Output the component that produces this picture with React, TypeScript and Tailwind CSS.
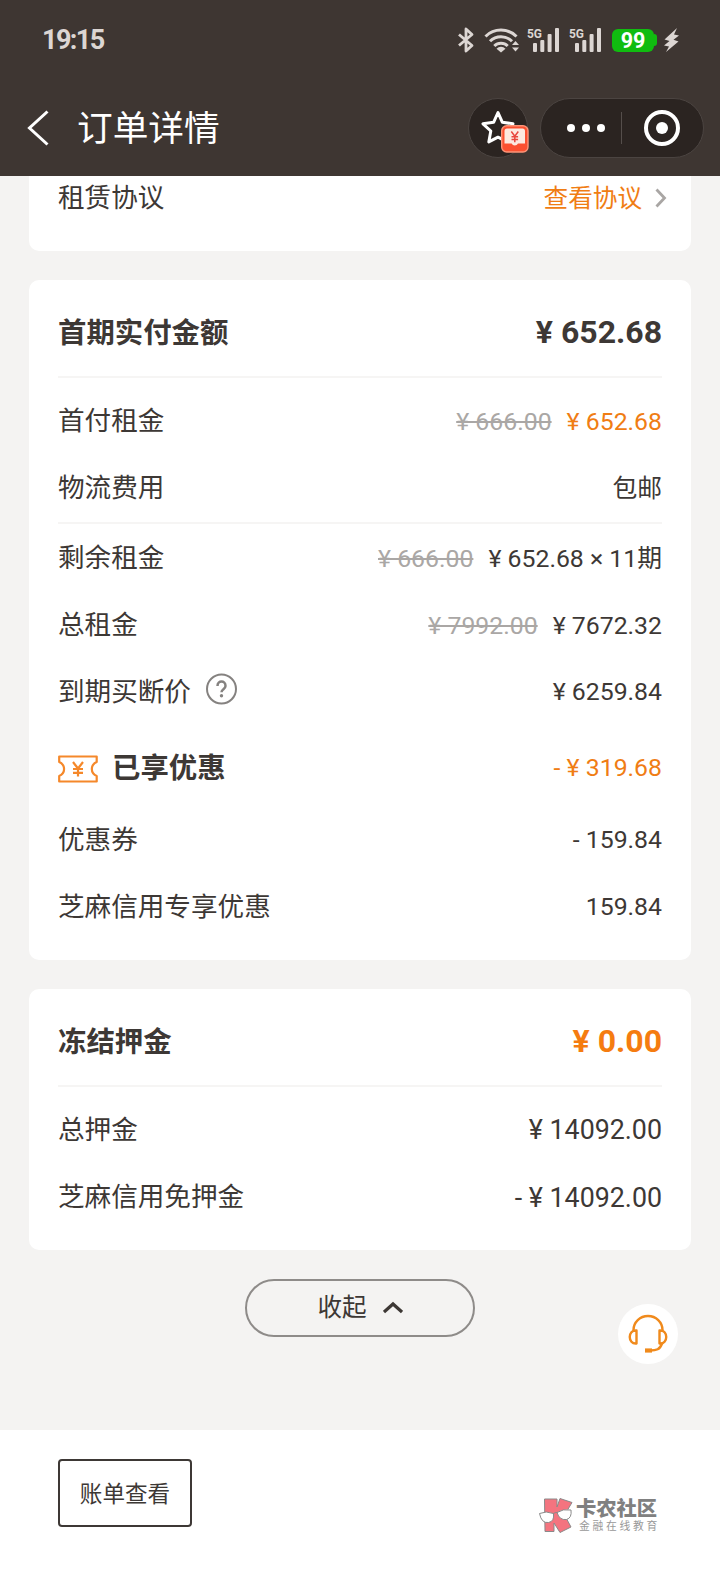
import type { ReactNode } from 'react';

interface RowProps {
  label: ReactNode;
  value: ReactNode;
  oldValue?: string;
  className?: string;
  valueClassName?: string;
}

function Row({ label, value, oldValue, className = 'h-[67px]', valueClassName = 'pt-[2px] text-[24.8px]' }: RowProps) {
  return (
    <div className={`flex items-center justify-between ${className}`}>
      <div className="flex items-center text-[26.6px]">{label}</div>
      <div className={`flex items-center gap-[15px] ${valueClassName}`}>
        {oldValue && <span className="text-[#aaa7a5] line-through">{oldValue}</span>}
        <span>{value}</span>
      </div>
    </div>
  );
}

function CardTitle({ title, amount, amountClassName = '' }: { title: string; amount: string; amountClassName?: string }) {
  return (
    <div className="flex h-[98px] items-center justify-between border-b-2 border-[#f6f5f4] pt-[8px] font-bold">
      <span className="pt-[4px] text-[28.4px]">{title}</span>
      <span className={`text-[32px] ${amountClassName}`}>{amount}</span>
    </div>
  );
}

function Signal() {
  return (
    <svg className="overflow-visible" width="34" height="26" viewBox="0 0 34 26" fill="#dcd6d3">
      <text x="0" y="11" fontSize="13.5" fontWeight="700" textLength="15" lengthAdjust="spacingAndGlyphs">5G</text>
      <rect x="6" y="16" width="4" height="9" rx="1" />
      <rect x="13.3" y="13" width="4" height="12" rx="1" />
      <rect x="20.6" y="7" width="4" height="18" rx="1" />
      <rect x="28" y="1" width="4" height="24" rx="1" />
    </svg>
  );
}

function StatusBar() {
  return (
    <div className="flex h-20 items-center justify-between pr-[40px] pl-[42px] text-[#dcd6d3]">
      <span className="text-[27px] font-bold tracking-[-1.6px]">19:15</span>
      <div className="flex items-center">
        <svg width="16" height="26" viewBox="0 0 16 26" fill="none" stroke="#dcd6d3" strokeWidth="2.8" strokeLinejoin="round">
          <path d="M1 7.5 14 18.5 8 24V2l6 5.5L1 18.5" />
        </svg>
        <svg className="ml-[10px]" width="36" height="26" viewBox="0 0 36 26" fill="none" stroke="#dcd6d3" strokeWidth="3">
          <path d="M1.5 9.500a22 22 0 0 1 31 0M6 14.300a15.500 15.500 0 0 1 22 0M10.300 19a9.500 9.500 0 0 1 13.400 0" />
          <path d="M12.500 21.700a6.400 6.400 0 0 1 9 0L17 25.500z" fill="#dcd6d3" stroke="none" />
          <path d="m28 18 3.500-4 3.500 4zM28 20.500h7l-3.500 4z" fill="#dcd6d3" stroke="none" />
        </svg>
        <div className="ml-[7px] flex gap-2">
          <Signal />
          <Signal />
        </div>
        <div className="ml-[9.5px] flex items-center">
          <span className="flex h-[23px] w-[42px] items-center justify-center rounded-[6px] bg-[#10bc10] pt-[3px] text-[21.5px] font-bold text-white">99</span>
          <span className="h-3 w-[3px] rounded-r-[3px] bg-[#10bc10]" />
        </div>
        <svg className="ml-[6px]" width="17" height="26" viewBox="0 0 17 26" fill="#dcd6d3">
          <path d="M14 1 1.5 12.5l5 1.500L1 18.500l5 1L3 25 15.500 14.500l-5-1.800L16 8.500l-5-1z" />
        </svg>
      </div>
    </div>
  );
}

function NavBar() {
  return (
    <div className="flex h-24 items-center pr-[16px] pl-[27px]">
      <svg width="22" height="36" viewBox="0 0 22 36" fill="none" stroke="#fff" strokeWidth="3">
        <path d="M20.5 1.5 2.5 18l18 16.5" />
      </svg>
      <h1 className="ml-[28px] flex-1 pt-[4px] text-[35.7px] leading-none text-white">订单详情</h1>
      <div className="relative flex size-[60px] items-center justify-center rounded-full border border-[#4b4441] bg-[#2b2421]">
        <svg width="34" height="36" viewBox="0 0 34 36" fill="none" stroke="#fff" strokeWidth="3" strokeLinejoin="round">
          <path d="m17 2.500 4.400 9.800 10.600 1.500-7.800 7.200 2 10.900L17 27.200l-9.200 4.700 2-10.900L2 13.800l10.600-1.500z" />
        </svg>
        <svg className="absolute top-[26px] left-[32px]" width="28" height="28" viewBox="0 0 28 28">
          <rect x=".7" y=".7" width="26.3" height="26.3" rx="5" fill="#fb5030" stroke="#fd9478" strokeWidth="1.4" />
          <path d="M3.500 6q0-2.500 2.500-2.500h15.500q2.500 0 2.500 2.500v12.500h-7q-1 2-3.200 2t-3.200-2h-7.100z" fill="#fde9df" />
          <path d="m10.300 6.500 3.500 4.700 3.500-4.700M13.800 11.200v6M10.500 11.700h6.600M10.500 14.400h6.600" fill="none" stroke="#e8463c" strokeWidth="1.500" />
        </svg>
      </div>
      <div className="ml-[12px] flex h-[60px] w-[164px] items-center rounded-full border border-[#4b4441] bg-[#2b2421]">
        <div className="flex w-[80px] justify-end gap-[7px] pr-[16px]">
          <i className="size-2 rounded-full bg-white" />
          <i className="size-2 rounded-full bg-white" />
          <i className="size-2 rounded-full bg-white" />
        </div>
        <div className="h-8 w-px bg-[#554e4b]" />
        <div className="ml-[22px] flex size-[36px] items-center justify-center rounded-full border-4 border-white">
          <i className="size-3 rounded-full bg-white" />
        </div>
      </div>
    </div>
  );
}

function CouponIcon() {
  return (
    <svg className="mt-[2px]" width="40" height="28" viewBox="0 0 40 28" fill="none" stroke="#f5882a" strokeWidth="2.200" strokeLinejoin="round">
      <path d="M1.200 1.500h37.500V7c-6.500 3-6.500 11 0 14v5.500H1.200V21c6.500-3 6.500-11 0-14z" />
      <path d="m15 7 5 6.500L25 7M20 13.500v8M15 14h10M15 17.800h10" />
    </svg>
  );
}

function HelpIcon() {
  return (
    <svg className="mb-[4px]" width="32" height="32" viewBox="0 0 32 32" fill="none" stroke="#858280" strokeWidth="2">
      <circle cx="15.500" cy="16" r="14.500" />
      <path d="M11.500 13c0-6 8-6 8 0 0 3.200-4 3.300-4 6.300" strokeWidth="2.500" />
      <circle cx="15.500" cy="22.800" r="1.700" fill="#858280" stroke="none" />
    </svg>
  );
}

function Watermark() {
  return (
    <div className="flex items-center">
      <svg width="35" height="36" viewBox="0 0 35 36" stroke="#8a8a8a">
        <path d="M6.500 2H19v8l3-8.500 12 4-7.500 12.500 6.500 12-11 5.500-6-9.500v8.500H7z" fill="#f4747f" />
        <path d="M1.500 16.500q6.500-3 14 0 1 8-5 9-7 1-9-9zM19 15.500q6-4 14-2.500 1 8-4.500 9.500-7 1-9.500-7z" fill="#fff" />
        <path d="M15 17q2-2 4.500-1.500" fill="none" />
      </svg>
      <div className="ml-[3px] flex flex-col">
        <span className="text-[20.300px] leading-[24px] font-black text-[#808080]">卡农社区</span>
        <span className="pl-[3px] text-[10.800px] leading-[12px] tracking-[2.700px] text-[#999]">金融在线教育</span>
      </div>
    </div>
  );
}

export default function App() {
  return (
    <div className="flex h-[1584px] w-[720px] flex-col overflow-hidden bg-[#f4f3f2] font-['Roboto','Noto_Sans_CJK_SC',sans-serif] text-[#3d3835]">
      <header className="h-[176px] shrink-0 bg-[#3e3632]">
        <StatusBar />
        <NavBar />
      </header>

      <main className="flex flex-1 flex-col gap-[29px] px-[29px]">
        <section className="h-[75px] rounded-b-[10px] bg-white px-[29px]">
          <Row
            className="h-[44px]"
            label="租赁协议"
            value={
              <span className="flex items-center text-[24.600px] text-[#f07d14]">
                查看协议
                <svg className="mr-[-5px] mb-[2px] ml-[13px]" width="12" height="20" viewBox="0 0 12 20" fill="none" stroke="#a9a6a4" strokeWidth="2.800">
                  <path d="m1.500 1.500 8 8.500-8 8.500" />
                </svg>
              </span>
            }
          />
        </section>

        <section className="h-[680px] rounded-[10px] bg-white px-[29px]">
          <CardTitle title="首期实付金额" amount="¥ 652.68" />
          <div className="h-[146px] border-b-2 border-[#f6f5f4] pt-[9px]">
            <Row label="首付租金" oldValue="¥ 666.00" value={<span className="text-[#f07d14]">¥ 652.68</span>} />
            <Row className="h-[68px]" label="物流费用" value="包邮" />
          </div>
          <Row label="剩余租金" oldValue="¥ 666.00" value="¥ 652.68 × 11期" />
          <Row label="总租金" oldValue="¥ 7992.00" value="¥ 7672.32" />
          <Row
            label={
              <>
                <span className="mr-[15px]">到期买断价</span>
                <HelpIcon />
              </>
            }
            value="¥ 6259.84"
            valueClassName="text-[24.8px]"
          />
          <Row
            className="mt-[5px] h-[76px]"
            label={
              <>
                <CouponIcon />
                <span className="ml-[14px] pt-[3px] text-[28.400px] font-bold">已享优惠</span>
              </>
            }
            value={<span className="text-[#f07d14]">- ¥ 319.68</span>}
            valueClassName="text-[24.8px]"
          />
          <Row label="优惠券" value="- 159.84" valueClassName="text-[24.8px]" />
          <Row label="芝麻信用专享优惠" value="159.84" valueClassName="text-[24.8px]" />
        </section>

        <section className="h-[261px] rounded-[10px] bg-white px-[29px]">
          <CardTitle title="冻结押金" amount="¥ 0.00" amountClassName="text-[#f57c10]" />
          <div className="pt-[9px]">
            <Row label="总押金" value="¥ 14092.00" valueClassName="pt-[2px] text-[26.800px]" />
            <Row className="h-[68px]" label="芝麻信用免押金" value="- ¥ 14092.00" valueClassName="pt-[2px] text-[26.800px]" />
          </div>
        </section>

        <div className="relative flex justify-center">
          <button className="flex h-[58px] w-[230px] items-center justify-center rounded-full border-2 border-[#8e8b89] text-[24.600px]">
            收起
            <svg className="ml-[16px]" width="20" height="14" viewBox="0 0 20 14" fill="none" stroke="#3d3835" strokeWidth="3.200">
              <path d="m1 11 9-8 9 8" />
            </svg>
          </button>
          {/* floating customer service entry */}
          <button className="absolute top-[25px] right-[13px] flex size-[60px] items-center justify-center rounded-full bg-white">
            <svg width="40" height="40" viewBox="0 0 40 40" fill="none" stroke="#f08a1c" strokeWidth="2.400" strokeLinejoin="round">
              <path d="M5.500 16a14.500 14 0 0 1 29 0" />
              <path d="M8.500 16.500v13c-9 1-9-14 0-13zM31.500 16.500v13c9 1 9-14 0-13z" />
              <path d="M34 29.500c-2 6-5.500 7-12 7" />
              <path d="M17 36.500h7" strokeWidth="4.200" />
            </svg>
          </button>
        </div>
      </main>

      <footer className="flex h-[154px] shrink-0 items-start justify-between bg-white pt-[29px] pr-[60px] pl-[58px]">
        <button className="h-[68px] w-[134px] rounded-[4px] border-2 border-[#3d3835] pt-[4px] text-[22.600px]">账单查看</button>
        <div className="pt-[38px]">
          <Watermark />
        </div>
      </footer>
    </div>
  );
}
